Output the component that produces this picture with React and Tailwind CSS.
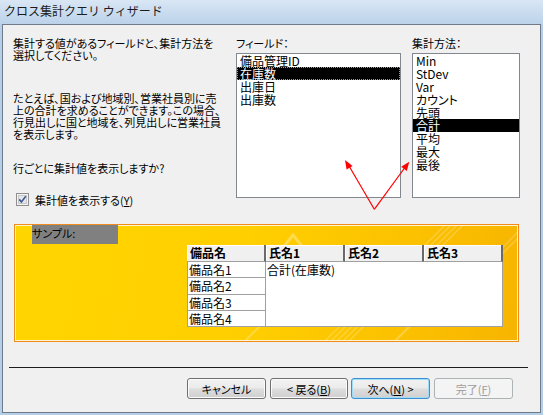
import React from "react";

const jp = "font-['Noto_Sans_CJK_JP',sans-serif]";
const palt = "[font-feature-settings:'palt']";

const fields = ["備品管理ID", "在庫数", "出庫日", "出庫数"];
const methods = ["Min", "StDev", "Var", "カウント", "先頭", "合計", "平均", "最大", "最後"];

function ListBox({ items, selected, focused }) {
  return (
    <div className="mt-[4px] h-[145px] border border-[#828790] bg-white">
      {items.map((item, i) => (
        <div
          key={item}
          className={`h-[13px] whitespace-nowrap pl-[3px] text-[12px] leading-[13px] ${
            i === selected ? "bg-black text-white" : "text-black"
          } ${i === selected && focused ? "outline-1 outline-dotted outline-offset-[-1px] outline-[#9a9a9a]" : ""}`}
        >
          {item}
        </div>
      ))}
    </div>
  );
}

function WizButton({ children, className = "", kind = "normal" }) {
  const tone =
    kind === "disabled"
      ? "border-[#adb2b5] bg-[#f4f4f4] text-[#9c9c9c]"
      : kind === "default"
      ? "border-[#3c8fd0] bg-[linear-gradient(180deg,#f2f2f2_0%,#ebebeb_48%,#dddddd_52%,#cfcfcf_100%)] shadow-[inset_0_0_0_1px_#9fdcf7] text-black"
      : "border-[#707070] bg-[linear-gradient(180deg,#f2f2f2_0%,#ebebeb_48%,#dddddd_52%,#cfcfcf_100%)] shadow-[inset_0_0_0_1px_#fbfbfb] text-black";
  return (
    <div className={`flex h-[21px] items-center justify-center rounded-[3px] border text-[11px] leading-[12px] ${tone} ${className}`}>
      {children}
    </div>
  );
}

function CheckBox() {
  return (
    <svg width="13" height="13" viewBox="0 0 13 13" className="shrink-0">
      <rect x="0.5" y="0.5" width="12" height="12" fill="#f4f4f4" stroke="#8f8f8f" />
      <rect x="2.5" y="2.5" width="8" height="8" fill="#e6e6e6" stroke="#c8c8c8" />
      <path d="M3.2 6.4 L5.4 8.9 L9.8 3.2" fill="none" stroke="#3d5a98" strokeWidth="1.6" />
    </svg>
  );
}

export default function App() {
  return (
    <div className={`flex h-[415px] w-[543px] flex-col overflow-hidden bg-[#b6cfe9] ${jp}`}>
      <div className="h-[24px] shrink-0 bg-[linear-gradient(180deg,#d9e6f4_0%,#c7daee_60%,#bcd2ea_100%)] pl-[4px] pt-[5px] text-[12px] leading-[12px] text-[#1c1c1c]">
        クロス集計クエリ ウィザード
      </div>

      <div className={`relative ml-[2px] flex h-[389px] w-[539px] flex-col border border-[#6f7b88] bg-[#f0f0f0] text-[11px] leading-[12px] text-black ${palt}`}>
        <div className="flex pt-[12px]">
          <div className="w-[233px] shrink-0 pl-[10px]">
            <p className="whitespace-nowrap">
              集計する値があるフィールドと、集計方法を
              <br />
              選択してください。
            </p>
            <p className="mt-[31px] whitespace-nowrap">
              たとえば、国および地域別、営業社員別に売
              <br />
              上の合計を求めることができます。この場合、
              <br />
              行見出しに国と地域を、列見出しに営業社員
              <br />
              を表示します。
            </p>
            <p className="mt-[22px] whitespace-nowrap">行ごとに集計値を表示しますか?</p>
            <div className="ml-[3px] mt-[19px] flex h-[13px] items-center">
              <CheckBox />
              <span className="ml-[6px] whitespace-nowrap">
                集計値を表示する(<span className="underline">Y</span>)
              </span>
            </div>
          </div>

          <div className="w-[165px] shrink-0">
            <div className="whitespace-nowrap">フィールド：</div>
            <ListBox items={fields} selected={1} focused />
          </div>

          <div className="ml-[11px] w-[108px] shrink-0">
            <div className="whitespace-nowrap">集計方法：</div>
            <ListBox items={methods} selected={5} />
          </div>
        </div>

        <div className="relative ml-[11px] mt-[18px] flex h-[118px] w-[505px] flex-col overflow-hidden border border-[#f08c1e] bg-[linear-gradient(100deg,#ffd500_0%,#ffcf00_45%,#fcc200_75%,#f7b400_100%)] shadow-[inset_0_0_0_1px_#fff6d0]">
          <svg className="absolute left-0 top-0" width="503" height="116" viewBox="0 0 503 116">
            <path d="M254 40 L278 10 L302 40" fill="none" stroke="#ffffff" strokeOpacity="0.3" strokeWidth="3" />
            <path d="M262 44 L278 24 L294 44" fill="none" stroke="#ffffff" strokeOpacity="0.18" strokeWidth="2" />
            <g stroke="#ffffff" strokeOpacity="0.22" strokeWidth="1.5">
              <path d="M400 30 L430 0" />
              <path d="M406 30 L436 0" />
              <path d="M412 30 L442 0" />
              <path d="M418 30 L448 0" />
              <path d="M470 40 L503 7" />
              <path d="M476 40 L503 13" />
              <path d="M310 116 L330 96" />
              <path d="M316 116 L336 96" />
              <path d="M322 116 L342 96" />
              <path d="M328 116 L348 96" />
              <path d="M334 116 L354 96" />
            </g>
            <path d="M230 116 L260 86 M380 116 L410 86" stroke="#ffffff" strokeOpacity="0.25" strokeWidth="2" />
          </svg>

          <div className="relative ml-[17px] h-[19px] w-[86px] bg-[#808080] pt-[2px] text-[11px] leading-[12px] text-black">
            サンプル:
          </div>

          <div className="relative ml-[172px] mt-[1px] w-[316px]">
            <div className="flex h-[17px]">
              {["備品名", "氏名1", "氏名2", "氏名3"].map((h) => (
                <div
                  key={h}
                  className="h-[17px] w-[79px] border-b border-r-2 border-b-[#a0a0a0] border-r-[#6a6a6a] bg-[#f0f0f0] pl-[3px] text-[12px] font-bold leading-[16px] shadow-[inset_1px_1px_0_#ffffff]"
                >
                  {h}
                </div>
              ))}
            </div>
            <div className="flex h-[65px] border border-t-0 border-[#a0a0a0] bg-white text-[12px]">
              <div className="flex w-[78px] flex-col border-r border-[#a0a0a0]">
                {["備品名1", "備品名2", "備品名3", "備品名4"].map((r, i) => (
                  <div
                    key={r}
                    className={`flex-1 pl-[1px] leading-[15px] ${i < 3 ? "border-b border-[#a0a0a0]" : ""}`}
                  >
                    {r}
                  </div>
                ))}
              </div>
              <div className="flex-1 pl-[1px] leading-[15px]">合計(在庫数)</div>
            </div>
          </div>
        </div>

        <div className="ml-[6px] mt-[25px] h-px w-[519px] bg-[#1e1e1e]" />

        <div className="ml-[184px] mt-[10px] flex">
          <WizButton className="w-[79px]">キャンセル</WizButton>
          <WizButton className="ml-[4px] w-[78px]">
            &lt; 戻る(<span className="underline">B</span>)
          </WizButton>
          <WizButton className="ml-[3px] w-[79px]" kind="default">
            次へ(<span className="underline">N</span>) &gt;
          </WizButton>
          <WizButton className="ml-[4px] w-[79px]" kind="disabled">
            完了(<span className="underline">F</span>)
          </WizButton>
        </div>

        <svg className="pointer-events-none absolute left-0 top-0" width="539" height="389" viewBox="0 0 539 389">
          <path d="M371.3 184.3 L344 137.5" stroke="#ff0000" strokeWidth="1.2" fill="none" />
          <path d="M371.3 184.3 L404.5 139" stroke="#ff0000" strokeWidth="1.2" fill="none" />
          <polygon points="342,135 349.6,140.9 343.6,144.5" fill="#ff0000" />
          <polygon points="406.3,136.7 403.8,146 398.2,141.8" fill="#ff0000" />
        </svg>
      </div>
    </div>
  );
}
